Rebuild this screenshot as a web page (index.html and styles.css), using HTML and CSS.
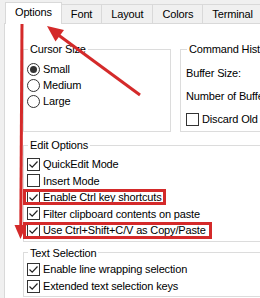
FILE: index.html
```html
<!DOCTYPE html>
<html lang="en">
<head>
  <meta charset="UTF-8">
  <title>Console Properties</title>
  <link rel="stylesheet" href="styles.css">
</head>
<body>

  <!-- Tabs -->
  <div class="tabs">
    <div class="tab active">Options</div>
    <div class="tab">Font</div>
    <div class="tab">Layout</div>
    <div class="tab">Colors</div>
    <div class="tab">Terminal</div>
  </div>

  <!-- Options page -->
  <div class="page">
    <div class="group-row">
      <fieldset class="group cursor-size">
        <legend>Cursor Size</legend>
        <div class="group-body">
          <div class="option"><span class="radio on"></span>Small</div>
          <div class="option"><span class="radio"></span>Medium</div>
          <div class="option"><span class="radio"></span>Large</div>
        </div>
      </fieldset>
      <fieldset class="group history">
        <legend>Command History</legend>
        <div class="group-body">
          <div class="option">Buffer Size:</div>
          <div class="option">Number of Buffers:</div>
          <div class="option"><span class="check"></span>Discard Old Duplicates</div>
        </div>
      </fieldset>
    </div>

    <fieldset class="group edit">
      <legend>Edit Options</legend>
      <div class="group-body">
        <div class="option"><span class="check"><svg viewBox="0 0 11 11"><path d="M1.5 5.5 L4.2 8.2 L9.5 2.5"/></svg></span>QuickEdit Mode</div>
        <div class="option"><span class="check"></span>Insert Mode</div>
        <div class="option"><span class="check"><svg viewBox="0 0 11 11"><path d="M1.5 5.5 L4.2 8.2 L9.5 2.5"/></svg></span>Enable Ctrl key shortcuts</div>
        <div class="option"><span class="check"><svg viewBox="0 0 11 11"><path d="M1.5 5.5 L4.2 8.2 L9.5 2.5"/></svg></span>Filter clipboard contents on paste</div>
        <div class="option"><span class="check"><svg viewBox="0 0 11 11"><path d="M1.5 5.5 L4.2 8.2 L9.5 2.5"/></svg></span>Use Ctrl+Shift+C/V as Copy/Paste</div>
      </div>
    </fieldset>

    <fieldset class="group selection">
      <legend>Text Selection</legend>
      <div class="group-body">
        <div class="option"><span class="check"><svg viewBox="0 0 11 11"><path d="M1.5 5.5 L4.2 8.2 L9.5 2.5"/></svg></span>Enable line wrapping selection</div>
        <div class="option"><span class="check"><svg viewBox="0 0 11 11"><path d="M1.5 5.5 L4.2 8.2 L9.5 2.5"/></svg></span>Extended text selection keys</div>
      </div>
    </fieldset>
  </div>

  <!-- Red annotations drawn over the dialog -->
  <svg class="marks" viewBox="0 0 260 298" width="260" height="298">
    <g fill="none" stroke="#d42a2a" stroke-width="3">
      <rect x="24.5" y="190.5" width="140" height="13" />
      <rect x="24.5" y="223.5" width="186" height="14" />
      <line x1="22" y1="23" x2="20.8" y2="228" />
      <line x1="57" y1="34" x2="140" y2="95" />
    </g>
    <g fill="#d42a2a">
      <polygon points="14.5,225 26.5,225 20.5,239" />
      <polygon points="47,26 64,30 55.5,41.5" />
    </g>
  </svg>

</body>
</html>
```

FILE: styles.css
```css
html, body {
  margin: 0;
  padding: 0;
  overflow: hidden;
}

body {
  position: relative;
  width: 260px;
  height: 298px;
  background: #f0f0f0;
  font-family: "Liberation Sans", Arial, sans-serif;
  font-size: 11px;
  letter-spacing: -0.15px;
  color: #000;
}

/* Tabs */
.tabs {
  display: flex;
  align-items: flex-end;
  height: 23px;
  padding-left: 6px;
}

.tab {
  height: 18px;
  line-height: 18px;
  padding: 0 9px;
  border: 1px solid #d9d9d9;
  border-bottom: none;
  margin-left: -1px;
  background: #f0f0f0;
}

.tab.active {
  height: 21px;
  line-height: 18px;
  margin-bottom: -1px;
  background: #fff;
  position: relative;
  z-index: 1;
}

/* Page */
.page {
  width: 360px;
  height: 300px;
  margin-left: 4px;
  padding-left: 18px;
  background: #fff;
  border-top: 1px solid #d9d9d9;
  border-left: 1px solid #d9d9d9;
}

.group-row {
  display: flex;
  gap: 9px;
  margin-top: 18px;
}

.group {
  margin: 0;
  padding: 0 3px;
  min-width: 0;
  border: 1px solid #dcdcdc;
}

.group legend {
  margin-left: 1px;
  padding: 0 2px;
  line-height: 14px;
}

.group-body {
  display: flex;
  flex-direction: column;
}

.cursor-size {
  flex: none;
  box-sizing: border-box;
  width: 148px;
}

.cursor-size .group-body {
  padding-top: 5px;
}

.history {
  flex: 1;
  padding-left: 5px;
}

.history .group-body {
  gap: 7px;
  padding: 9px 0 4px;
}

.edit {
  margin-top: 6px;
}

.edit .group-body {
  padding: 4px 0 2.5px;
}

.edit .option {
  height: 16.5px;
}

.selection {
  margin-top: 3.5px;
}

.selection .group-body {
  padding: 1px 0 1px;
}

.selection .option {
  height: 17px;
}

.option {
  display: flex;
  align-items: center;
  gap: 3px;
  height: 16px;
  white-space: nowrap;
}

/* Radio and checkbox */
.radio {
  display: inline-flex;
  align-items: center;
  justify-content: center;
  box-sizing: border-box;
  width: 13px;
  height: 13px;
  border: 1px solid #333;
  border-radius: 50%;
  background: #fff;
  flex: none;
}

.radio.on::after {
  content: "";
  width: 7px;
  height: 7px;
  border-radius: 50%;
  background: #333;
}

.check {
  display: inline-flex;
  box-sizing: border-box;
  width: 13px;
  height: 13px;
  border: 1px solid #333;
  background: #fff;
  flex: none;
}

.check svg {
  width: 11px;
  height: 11px;
}

.check path {
  fill: none;
  stroke: #222;
  stroke-width: 1.2;
}

/* Annotations */
.marks {
  position: absolute;
  top: 0;
  left: 0;
  pointer-events: none;
}
```
